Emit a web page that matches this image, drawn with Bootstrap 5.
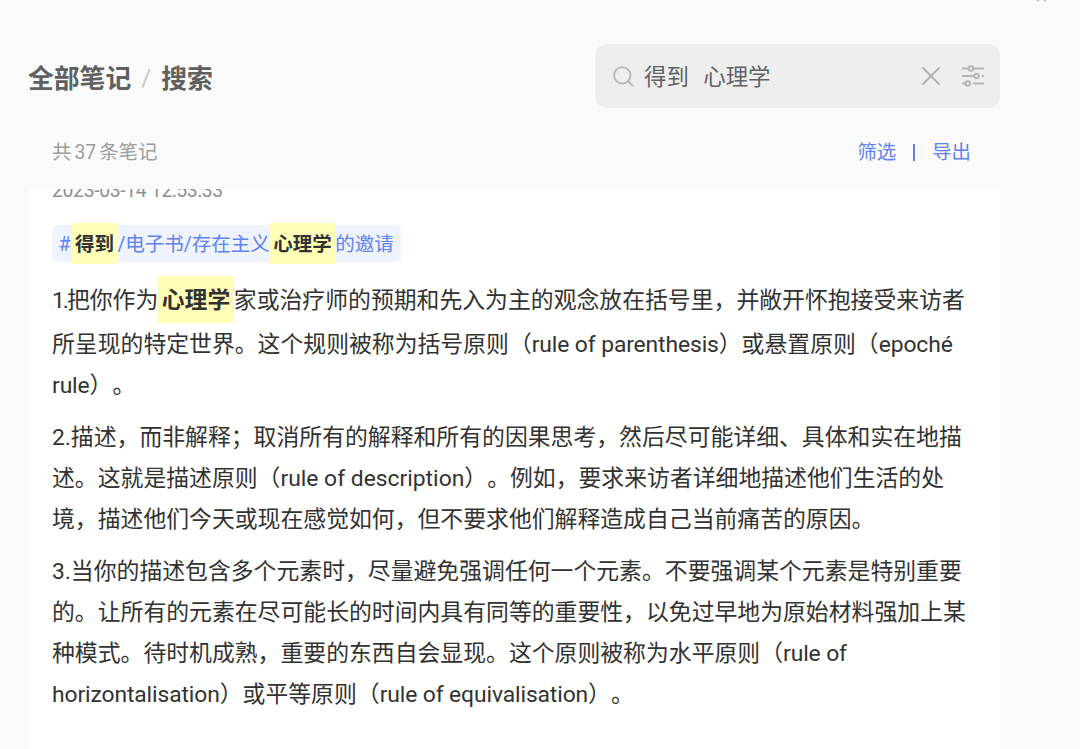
<!DOCTYPE html>
<html lang="zh-CN">
<head>
<meta charset="utf-8">
<title>搜索</title>
<link href="https://cdn.jsdelivr.net/npm/bootstrap@5.3.0/dist/css/bootstrap.min.css" rel="stylesheet">
<style>
body{background:#fafafa;font-family:Roboto,"Noto Sans CJK SC",sans-serif;color:#323232;height:749px;overflow:hidden;position:relative;text-spacing-trim:space-all}
.page-wrap{width:972px;margin-left:28px;height:749px;padding-top:44px}
.crumbs{font-size:25.8px;font-weight:700;color:#606060;line-height:64px;white-space:nowrap;padding-top:3px}
.crumbs .sep{color:#c8c8c8;font-weight:400;width:30px;text-align:center;font-size:24px;margin-top:-1px}
.search-box{width:405px;height:64px;background:#eee;border-radius:12px;color:#606266;font-size:22.4px;line-height:64px;padding:0 14px 0 16px}
.search-box .term{padding-top:2px}
.info-bar{height:81px;flex:none;padding:0 29px 0 24px;font-size:19.4px;line-height:87px;color:#9d9d9d}
.info-bar .cnt{word-spacing:-1.5px;letter-spacing:-.1px;margin-top:1px}
.link-blue{color:#6081f1;height:89px}
.link-blue i{width:2px;height:17px;background:#6081f1;margin:0 17px}
.note{background:#fff;height:560px;flex:none;padding:0 24px}
.stamp{font-size:19.4px;line-height:24px;height:46px;margin-top:-10px;color:#8f8f8f;letter-spacing:-.35px}
.tag-pill{width:349px;height:37px;background:#eef3fe;border-radius:6px;color:#6081f1;font-size:19.5px;line-height:35px;padding-left:6.5px;white-space:nowrap}
.tag-pill span{padding-top:2px}
.tag-pill .hash{width:13px}
.tag-pill .slash{width:7.8px}
.hit{display:inline-block;background:#ffffb8;color:#323232;font-weight:700;padding:4px 3.5px 2px;line-height:41px}
.tag-pill .hit{line-height:35px;padding:4px 3.5px 2px}
.note-body{font-size:22.85px;line-height:41.1px;margin-top:14px;white-space:nowrap}
.note-body p{margin:0 0 11.1px}
.note-body p:first-child .hit{margin-bottom:1px}
.note-body p + p{margin-bottom:10.4px}
.en{letter-spacing:-.11px}
.en-wide{letter-spacing:0}
.one{letter-spacing:-2px}
</style>
</head>
<body>
<svg class="position-absolute" style="left:1036px;top:0" width="12" height="2"><path d="M1 0h2M8 0h2" stroke="#aaa" stroke-width="2"/></svg>
<main class="page-wrap d-flex flex-column">
  <header class="d-flex justify-content-between" style="height:64px">
    <div class="crumbs d-flex"><span>全部笔记</span><span class="sep">/</span><span>搜索</span></div>
    <div class="search-box d-flex align-items-center">
      <svg width="24" height="24" fill="none" stroke="#b9b9b9" stroke-width="1.9" stroke-linecap="round"><circle cx="11.300" cy="11.300" r="8.200"/><path d="M17.300 17.300l4.200 4.200"/></svg>
      <span class="term" style="margin-left:9px">得到</span><span class="term" style="margin-left:14.5px">心理学</span>
      <svg class="ms-auto" width="24" height="24" fill="none" stroke="#b0b0b0" stroke-width="1.8" stroke-linecap="round"><path d="M4 4l16 16M20 4L4 20"/></svg>
      <svg style="margin-left:17px" width="26" height="26" fill="none" stroke="#b5b5b5" stroke-width="1.9"><path d="M2 5.500h6.500M13.500 5.500H24M2 13h11.500M22 13h2M2 20.500h3M13 20.500h11"/><g fill="#eee"><circle cx="11" cy="5.500" r="2.300"/><circle cx="16.500" cy="13" r="2.300"/><circle cx="7.800" cy="20.500" r="2.300"/></g></svg>
    </div>
  </header>
  <div class="info-bar d-flex justify-content-between">
    <span class="cnt">共 37 条笔记</span>
    <span class="link-blue d-flex align-items-center"><span>筛选</span><i></i><span>导出</span></span>
  </div>
  <article class="note overflow-hidden">
    <div class="stamp">2023-03-14 12:53:33</div>
    <div class="tag-pill d-flex align-items-center"><span class="hash">#</span><span class="hit">得到</span><span class="slash">/</span><span>电子书</span><span class="slash">/</span><span>存在主义</span><span class="hit">心理学</span><span>的邀请</span></div>
    <div class="note-body">
      <p><span class="one">1.</span>把你作为<span class="hit">心理学</span>家或治疗师的预期和先入为主的观念放在括号里，并敞开怀抱接受来访者<br>所呈现的特定世界。这个规则被称为括号原则（<span class="en">rule of parenthesis</span>）或悬置原则（<span class="en">epoché</span><br><span class="en">rule</span>）。</p>
      <p>2.描述，而非解释；取消所有的解释和所有的因果思考，然后尽可能详细、具体和实在地描<br>述。这就是描述原则（<span class="en-wide">rule of description</span>）。例如，要求来访者详细地描述他们生活的处<br>境，描述他们今天或现在感觉如何，但不要求他们解释造成自己当前痛苦的原因。</p>
      <p>3.当你的描述包含多个元素时，尽量避免强调任何一个元素。不要强调某个元素是特别重要<br>的。让所有的元素在尽可能长的时间内具有同等的重要性，以免过早地为原始材料强加上某<br>种模式。待时机成熟，重要的东西自会显现。这个原则被称为水平原则（<span class="en">rule of</span><br><span class="en">horizontalisation</span>）或平等原则（<span class="en">rule of equivalisation</span>）。</p>
    </div>
  </article>
</main>
<script src="https://cdn.jsdelivr.net/npm/bootstrap@5.3.0/dist/js/bootstrap.bundle.min.js"></script>
</body>
</html>
